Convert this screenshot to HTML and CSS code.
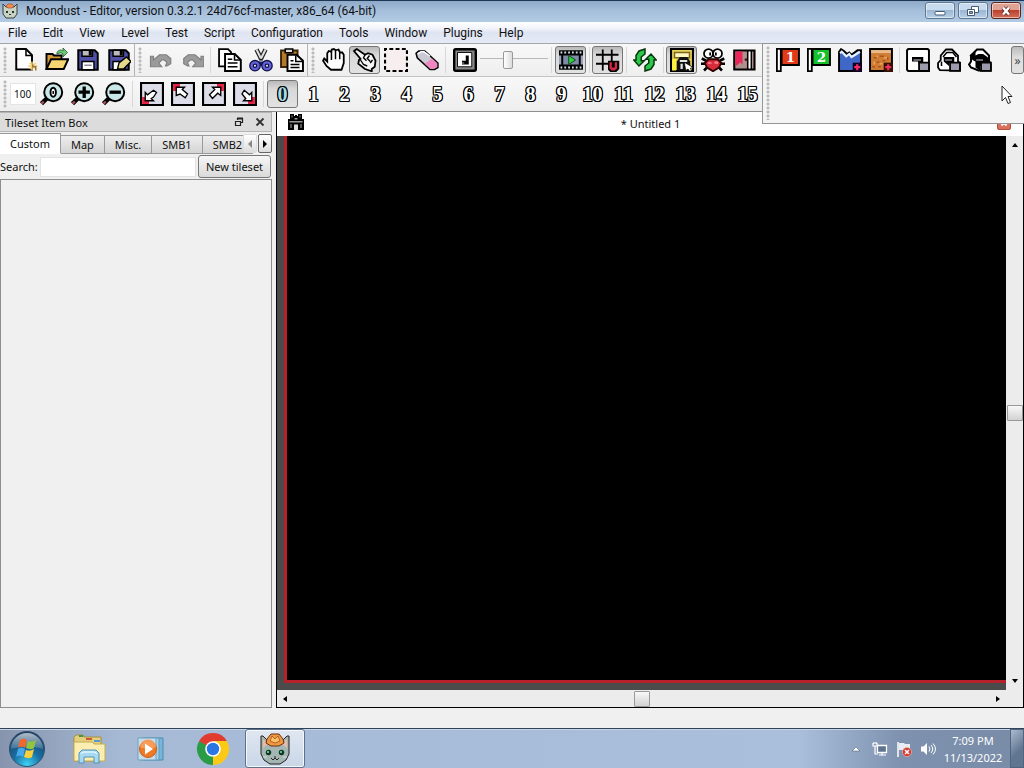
FILE: index.html
```html
<!DOCTYPE html>
<html lang="en">
<head>
  <meta charset="UTF-8" />
  <meta name="viewport" content="width=device-width, initial-scale=1" />
  <title>Moondust - Editor</title>
  <link rel="stylesheet" href="styles.css">
</head>
<body>
  <div class="window">
    <!-- Title bar -->
    <header class="titlebar">
      <svg class="app-icon" viewBox="0 0 16 16"><path d="M1 1l3 3h8l3-3v10l-3 4H4l-3-4z" fill="#c9d3c4" stroke="#3a4038"/><path d="M4 3l2-2h4l2 2-2 2H6z" fill="#f0904a" stroke="#a33" stroke-width=".6"/><path d="M4 8h2v2H4zM10 8h2v2h-2zM7 11h2v1H7z" fill="#26362c"/></svg>
      <h1>Moondust - Editor, version 0.3.2.1 24d76cf-master, x86_64 (64-bit)</h1>
      <div class="window-buttons">
        <button aria-label="Minimize"><svg viewBox="0 0 16 12"><rect x="3" y="6.500" width="10" height="3.500" rx="1" fill="#fff" stroke="#465a73"/></svg></button>
        <button aria-label="Restore"><svg viewBox="0 0 16 12"><path d="M6.500 1.500h7v6h-7z" fill="#fff" stroke="#465a73"/><path d="M2.500 4.500h7v6h-7z" fill="#fff" stroke="#465a73"/><path d="M4.500 6.500h3v2h-3z" fill="#8aa8c8" stroke="#465a73"/></svg></button>
        <button class="close" aria-label="Close"><svg viewBox="0 0 16 12"><path d="M5 2.500l6 7M11 2.500l-6 7" stroke="#5b2a2a" stroke-width="4"/><path d="M5 2.500l6 7M11 2.500l-6 7" stroke="#fff" stroke-width="2.400"/></svg></button>
      </div>
    </header>

    <nav class="menubar">
      <button>File</button><button>Edit</button><button>View</button><button>Level</button><button>Test</button><button>Script</button><button>Configuration</button><button>Tools</button><button>Window</button><button>Plugins</button><button>Help</button>
    </nav>

    <!-- Toolbars -->
    <div class="toolbars">
      <div class="toolbar-row">
        <div class="toolbar">
          <span class="grip"></span>
          <button class="tool" aria-label="New"><svg viewBox="0 0 16 16"><path d="M1.500.7h6.500l4 4v9.600H1.500z" fill="#fff" stroke="#000" stroke-width="1.300"/><path d="M8 1v4h4" fill="none" stroke="#000"/><path d="M12 9v6M9.500 12h6M10.500 10l4 4M14.500 10l-4 4" stroke="#f3cf74"/><path d="M12 11h1v1h2v3h-1v-2h-2z" fill="#9c7638"/></svg></button>
          <button class="tool" aria-label="Open"><svg viewBox="0 0 16 16"><path d="M1 14V4h4l1 1h5v3" fill="#d49d36" stroke="#000" stroke-width="1.300"/><path d="M1 14l3-6.500h11.500l-3 6.500z" fill="#f5d673" stroke="#000" stroke-width="1.300"/><path d="M8 3c1-2 3-2 4-1V0l3 3-3 3V4c-1-1-2-1-4 0z" fill="#64ce70" stroke="#244a28" stroke-width=".5"/></svg></button>
          <button class="tool" aria-label="Save"><svg viewBox="0 0 16 16"><path d="M1.500 1.500h11l2 2v11h-13z" fill="#5150a8" stroke="#000" stroke-width="1.300"/><path d="M4 1.500h7v4H4z" fill="#bbb" stroke="#000"/><path d="M8.500 2h2v3h-2z"/><path d="M4 9h8v5.500H4z" fill="#fff" stroke="#000"/><path d="M5.500 11.500h5" stroke="#8b8b95"/></svg></button>
          <button class="tool" aria-label="Save as"><svg viewBox="0 0 16 16"><path d="M1.500 1.500h11l2 2v11h-13z" fill="#5150a8" stroke="#000" stroke-width="1.300"/><path d="M4 1.500h7v4H4z" fill="#bbb" stroke="#000"/><path d="M8.500 2h2v3h-2z"/><path d="M4 9h8v5.500H4z" fill="#fff" stroke="#000"/><path d="M7 14l1-4 5-4 3 3-5 5z" fill="#e5d98a" stroke="#000" stroke-width=".9"/></svg></button>
        </div>
        <div class="toolbar">
          <span class="grip"></span>
          <button class="tool" aria-label="Undo" disabled><svg viewBox="0 0 16 16"><path d="M1 5.500h2V8l4-3.500h4.500L14.500 7v3.500L12 12h-1l1-2.500L10 8H8.500L6.500 10l2 2.500H1z" fill="#9b9b9b" stroke="#808080" stroke-width=".8"/></svg></button>
          <button class="tool" aria-label="Redo" disabled><svg viewBox="0 0 16 16"><path d="M16 5.500h-2V8l-4-3.500H5.500L2.500 7v3.500L5 12h1L5 9.500 7 8h1.500l2 2-2 2.500H16z" fill="#9b9b9b" stroke="#808080" stroke-width=".8"/></svg></button>
          <span class="sep"></span>
          <button class="tool" aria-label="Copy"><svg viewBox="0 0 16 16"><path d="M.7.700h6l2 2v9.500h-8z" fill="#fff" stroke="#000" stroke-width="1.200"/><path d="M4.700 4h6.500l4 4v7.300H4.700z" fill="#fff" stroke="#000" stroke-width="1.300"/><path d="M11 4v4h4M6.500 10h6.500M6.500 12.500h6.500M6.500 7.500h3" fill="none" stroke="#000"/></svg></button>
          <button class="tool" aria-label="Cut"><svg viewBox="0 0 16 16"><path d="M5 1l3.500 7M11 1L7.500 8" stroke="#222" stroke-width="3"/><path d="M5 1l3 6M11 1L8 7" stroke="#ddd" stroke-width="1.400"/><path d="M6 9h4v3H6z" fill="#222270"/><circle cx="4" cy="11.800" r="2.300" fill="#eee" stroke="#101048" stroke-width="3.200"/><circle cx="12" cy="11.800" r="2.300" fill="#eee" stroke="#101048" stroke-width="3.200"/><circle cx="4" cy="11.800" r="2.300" fill="none" stroke="#6262d8" stroke-width="1.500"/><circle cx="12" cy="11.800" r="2.300" fill="none" stroke="#6262d8" stroke-width="1.500"/></svg></button>
          <button class="tool" aria-label="Paste"><svg viewBox="0 0 16 16"><path d="M.7 1.700h11v11H.7z" fill="#b67a2c" stroke="#3b2508" stroke-width="1.300"/><path d="M3.500.6h5v2.600h-5z" fill="#ddd" stroke="#000"/><path d="M5 4.500h6l4.300 4v6.800H5z" fill="#fff" stroke="#000" stroke-width="1.300"/><path d="M10.500 5v4H15M7 11h6M7 13h6M7 8.500h2" fill="none" stroke="#000"/></svg></button>
        </div>
        <div class="toolbar wide">
          <span class="grip"></span>
          <button class="tool" aria-label="Hand"><svg viewBox="0 0 16 16"><path d="M3.500 9V3.500L4.500 2l1.700.5L6.500 1 8 .7 9 1.500l2-.5 1 2 1.500 0 1 1.500V10L13 14.500H6L3 12 .7 8.500 1.500 7z" fill="#fff" stroke="#000" stroke-width="1.200"/><path d="M6.300 2.500V8M9 2v5.500M11.800 3v4.500" stroke="#000"/></svg></button>
          <button class="tool checked" aria-label="Select"><svg viewBox="0 0 16 16"><path d="M.7 2L2.500.7l5.500 3.800L10 3.500l3 1 2 4-.5 4-2 1.500v1.500L8 14l-4.500-3.500L4 8l1-.8z" fill="#f5f5f5" stroke="#000" stroke-width="1.200"/><path d="M8 4.500l-1 2 2 2M11 5l-1.500 2 2 2M13 8l-1.500 2M5 8l2 3 2.500 1" fill="none" stroke="#000" stroke-width=".9"/></svg></button>
          <button class="tool" aria-label="Marquee"><svg viewBox="0 0 16 16"><path d="M.7.700h14.600v14.600H.7z" fill="#f7efef" stroke="#000" stroke-width="1.400" stroke-dasharray="2.600 1.570" stroke-dashoffset="1.300"/></svg></button>
          <button class="tool" aria-label="Eraser"><svg viewBox="0 0 16 16"><path d="M.7 3.500L2.500 2h4L15.300 10v3L13 14.300h-3L1.500 6.500z" fill="#cbc9d4" stroke="#000"/><path d="M6.500 10.500l5-3.500 3.300 3.300v2.400L12.800 13.800H10.200z" fill="#ee87bf"/><path d="M2 4l2-1.500h2l4 3" fill="none" stroke="#fff"/></svg></button>
          <span class="sep"></span>
          <button class="tool" aria-label="Item placing"><svg viewBox="0 0 16 16"><rect x=".8" y=".8" width="14.400" height="14.400" rx="1" fill="#888" stroke="#000" stroke-width="1.600"/><path d="M3 3h9.500v9.500H3z" fill="#fff" stroke="#000" stroke-width=".6"/><path d="M8.500 5h2v6H6V8.500h2.500z"/><path d="M6 9.500h1.500v1H6z" fill="#777"/></svg></button>
          <input class="zoom-slider" type="range" min="0" max="100" value="40" aria-label="Volume" />
          <span class="sep"></span>
          <button class="tool checked" aria-label="Animation"><svg viewBox="0 0 16 16"><path d="M0 1.500h16v13H0z"/><path d="M2.800 5h10.400v6H2.800z" fill="#7f8aa8"/><path d="M0 5h1.500v6H0zM14.500 5H16v6h-1.500z" fill="#98a2ba"/><path d="M1 3h14M1 13h14" stroke="#d6dfec" stroke-width="1.200" stroke-dasharray="1.200 1.350"/><path d="M6.500 5L11 8l-4.500 3z" fill="#32d246" stroke="#063d0b" stroke-width=".6"/></svg></button>
          <span class="sep narrow"></span>
          <button class="tool checked" aria-label="Snap to grid"><svg viewBox="0 0 16 16"><path d="M4.500 1v14M10.500 1v14M0 4.500h15M0 10.500h15" stroke="#000" stroke-width="1.200"/><path d="M8 8.500h7.500V14l-2 2h-4L8 14.500z"/><path d="M9 9.500h1.500v3.500h2V9.500H14v4l-1.500 1.500h-2L9 13.500z" fill="#d82745"/></svg></button>
          <span class="sep narrow"></span>
          <button class="tool" aria-label="Reload"><svg viewBox="0 0 16 16"><path d="M8 .7L4 2 2 5v3H.5L4 12l3.500-3.500H5.500V6L8 4z" fill="#2cc64b" stroke="#07370c"/><path d="M8 15.300l4-1.300 2-3V8h1.500L12 4 8.500 7.500h2V10L8 12z" fill="#2cc64b" stroke="#07370c"/></svg></button>
          <span class="sep narrow"></span>
          <button class="tool checked" aria-label="Section settings"><svg viewBox="0 0 16 16"><path d="M.7.700h14.600v14.600H.7z" fill="#ead35b" stroke="#000" stroke-width="1.400"/><path d="M1.400 8L4 5v10H1.400z" fill="#fff23d"/><path d="M3 3h10v3.500H3z" fill="#fff6c0" stroke="#7a661c"/><path d="M4.500 9l2-3h5l2 3v6h-9z" fill="#111"/><path d="M6.500 8h5v1.300h-5zM7 10.500h1.500V14H7z" fill="#e4e4e4"/><path d="M9.500 9.500l6 3.500-2 .5 1 1.500-1.500.5-1-1.500-1.500 1z" fill="#fff" stroke="#000" stroke-width=".5"/></svg></button>
          <button class="tool" aria-label="Creatures"><svg viewBox="0 0 16 16"><path d="M.5 7l3 1.500M15.500 7l-3 1.500M0 10.500h4M16 10.500h-4M2 15l3-3M14 15l-3-3" stroke="#000" stroke-width="1.700"/><circle cx="5" cy="3.700" r="3" fill="#fff" stroke="#000" stroke-width="1.200"/><circle cx="11" cy="3.700" r="3" fill="#fff" stroke="#000" stroke-width="1.200"/><path d="M5.500 3h1.200v2H5.500zM9.300 3h1.200v2H9.300z"/><path d="M2.500 10L5 7.500h6l2.500 2.500-1.500 3-4 2.500-4-2.500z" fill="#d72c3c" stroke="#300" stroke-width="1.200"/><path d="M4.500 9.500H7v1H4.500zM9 9h2.500v1.500H9z" fill="#ff828c"/></svg></button>
          <button class="tool" aria-label="Warps"><svg viewBox="0 0 16 16"><path d="M1.500 1.700h13.500v12.600H1.500z" fill="#b0908c" stroke="#000" stroke-width="1.400"/><path d="M2.200 2.400H7V11L5.500 9.500 4 11l-1.800 1z" fill="#e8265a"/><path d="M10.500 2v12M12.800 2v12" stroke="#000" stroke-width="1.100"/><path d="M11.100 2.400h1.200v11.200h-1.200z" fill="#fff"/><path d="M8.500 7H10v1.500H8.500z" fill="#401010"/></svg></button>
        </div>
      </div>

      <div class="toolbar-row second">
        <div class="toolbar wide">
          <span class="grip"></span>
          <input class="zoom-value" type="text" value="100" aria-label="Zoom percent" />
          <button class="tool" aria-label="Reset zoom"><svg viewBox="0 0 16 16"><path d="M1 14.500l3.500-3.500" stroke="#000" stroke-width="3"/><path d="M1 14.500l1.500-1.500" stroke="#a5525a" stroke-width="1.600"/><circle cx="8.800" cy="6.800" r="6" fill="#cbe8e8" stroke="#000" stroke-width="1.300"/><ellipse cx="8.800" cy="6.800" rx="1.800" ry="3" fill="#fff" stroke="#000" stroke-width="1.300"/><path d="M8.300 6h1v2h-1z"/></svg></button>
          <button class="tool" aria-label="Zoom in"><svg viewBox="0 0 16 16"><path d="M1 14.500l3.500-3.500" stroke="#000" stroke-width="3"/><path d="M1 14.500l1.500-1.500" stroke="#a5525a" stroke-width="1.600"/><circle cx="8.800" cy="6.800" r="6" fill="#cbe8e8" stroke="#000" stroke-width="1.300"/><path d="M8.800 3v7.600M5 6.800h7.600" stroke="#000" stroke-width="2.200"/></svg></button>
          <button class="tool" aria-label="Zoom out"><svg viewBox="0 0 16 16"><path d="M1 14.500l3.500-3.500" stroke="#000" stroke-width="3"/><path d="M1 14.500l1.500-1.500" stroke="#a5525a" stroke-width="1.600"/><circle cx="8.800" cy="6.800" r="6" fill="#cbe8e8" stroke="#000" stroke-width="1.300"/><path d="M5 6.800h7.600" stroke="#000" stroke-width="2.200"/></svg></button>
          <span class="sep"></span>
          <button class="tool" aria-label="Go to bottom left"><svg viewBox="0 0 16 16"><path d="M.7.700h14.600v14.600H.7z" fill="#dddde9" stroke="#000" stroke-width="1.400"/><path d="M1.400 10v4.600H6v-2H3.500V10z" fill="#e62246"/><path d="M3.500 7v5.500H9L7.500 11l1.500-1 2-3-2-1.500-2 1.500-2 1.500z" fill="#fff" stroke="#000" stroke-width=".9"/></svg></button>
          <button class="tool" aria-label="Go to top left"><svg viewBox="0 0 16 16"><path d="M.7.700h14.600v14.600H.7z" fill="#dddde9" stroke="#000" stroke-width="1.400"/><path d="M1.400 6V1.400H6v2H3.500V6z" fill="#e62246"/><path d="M3.500 9V3.500H9L7.500 5l3.500 3-1.500 2.500L6 8z" fill="#fff" stroke="#000" stroke-width=".9"/></svg></button>
          <button class="tool" aria-label="Go to top right"><svg viewBox="0 0 16 16"><path d="M.7.700h14.600v14.600H.7z" fill="#dddde9" stroke="#000" stroke-width="1.400"/><path d="M14.600 6V1.400H10v2h2.500V6z" fill="#e62246"/><path d="M12.500 9V3.500H7L8.500 5 5 8.500 7 11l3.500-3.500z" fill="#fff" stroke="#000" stroke-width=".9"/></svg></button>
          <button class="tool" aria-label="Go to bottom right"><svg viewBox="0 0 16 16"><path d="M.7.700h14.600v14.600H.7z" fill="#dddde9" stroke="#000" stroke-width="1.400"/><path d="M14.600 10v4.600H10v-2h2.500V10z" fill="#e62246"/><path d="M12.500 7v5.500H7L8.500 11 6 8l1.500-2.500 3.500 3z" fill="#fff" stroke="#000" stroke-width=".9"/></svg></button>
          <span class="sep"></span>
          <button class="tool section checked">0</button>
          <button class="tool section">1</button>
          <button class="tool section">2</button>
          <button class="tool section">3</button>
          <button class="tool section">4</button>
          <button class="tool section">5</button>
          <button class="tool section">6</button>
          <button class="tool section">7</button>
          <button class="tool section">8</button>
          <button class="tool section">9</button>
          <button class="tool section">10</button>
          <button class="tool section">11</button>
          <button class="tool section">12</button>
          <button class="tool section">13</button>
          <button class="tool section">14</button>
          <button class="tool section">15</button>
        </div>
      </div>

      <!-- Expanded part of the level toolbar -->
      <div class="toolbar-popup">
        <span class="grip"></span>
        <button class="tool" aria-label="Player 1 start"><svg viewBox="0 0 16 16"><path d="M.6.600h2.600v14.800H.6z" fill="#fff" stroke="#000" stroke-width="1.200"/><path d="M3.700.7h11.600v10.600H3.700z" fill="#e03a18" stroke="#000" stroke-width="1.300"/><text x="9.700" y="9.300" class="flag-number">1</text></svg></button>
        <button class="tool" aria-label="Player 2 start"><svg viewBox="0 0 16 16"><path d="M.6.600h2.600v14.800H.6z" fill="#fff" stroke="#000" stroke-width="1.200"/><path d="M3.700.7h11.600v10.600H3.700z" fill="#16c02d" stroke="#000" stroke-width="1.300"/><text x="9.700" y="9.300" class="flag-number">2</text></svg></button>
        <button class="tool" aria-label="Add water"><svg viewBox="0 0 16 16"><path d="M.7 2.500L2 .8 4 2l2 2 1.500-1L9 4.500 11 3l2-1.500h2.300v13.800H.7z" fill="#3f67c8" stroke="#000" stroke-width="1.300"/><path d="M1.400 3.500L2.500 2.500l3 3L7.500 4 9 6l2.500-1.500L14.600 2.500" fill="none" stroke="#e6f2ff" stroke-width="1.400"/><path d="M9.800 9.800H16V16H9.800z" fill="#102"/><path d="M12.800 10.800v4M10.800 12.800h4" stroke="#f02d62" stroke-width="1.500"/></svg></button>
        <button class="tool" aria-label="Add quicksand"><svg viewBox="0 0 16 16"><path d="M.7.700h14.600v14.600H.7z" fill="#d07c35" stroke="#000" stroke-width="1.300"/><path d="M1.400 2.400h13.200" stroke="#e7b98b" stroke-width="2"/><path d="M3 6h2v1H3zM7 5h3v1H7zM5 9h2v1H5zM9 8h2v1H9zM2 12h2v1H2zM6 12h2v1H6zM12 6h1v2h-1z" fill="#a8581a"/><path d="M5 5h1v1H5zM10 6h2v1h-2zM3 9h1v2H3zM7 10h2v1H7z" fill="#eba55f"/><path d="M9.800 9.800H16V16H9.800z" fill="#310"/><path d="M12.800 10.800v4M10.800 12.800h4" stroke="#f02d62" stroke-width="1.500"/></svg></button>
        <span class="sep narrow"></span>
        <button class="tool" aria-label="Lock blocks"><svg viewBox="0 0 16 16"><path d="M1.500.7h13l.8.8v13.800H1.500l-.8-.8v-13z" fill="#fff" stroke="#000" stroke-width="1.300"/><path d="M4 6h7.500v4H8v-1H4z"/><path d="M5 7.500h5v1H5z" fill="#8a8a94"/><path d="M8.700 9.700h6.600v5.600H8.700z" fill="#9b9bab" stroke="#000" stroke-width="1.200"/></svg></button>
        <button class="tool" aria-label="Lock background objects"><svg viewBox="0 0 16 16"><path d="M2 14.800L.7 13v-3L2.500 8V5L6 1h4l4 4v4l1.300 1v5z" fill="#fff" stroke="#000" stroke-width="1.200"/><path d="M4 6l2.500-3h4L13 6M3 12V9" fill="none" stroke="#000"/><path d="M4.500 6h7v4H8v2L4.500 9z"/><path d="M5.500 7.500h4.500v1H5.500z" fill="#8a8a94"/><path d="M8.700 9.700h6.600v5.600H8.700z" fill="#9b9bab" stroke="#000" stroke-width="1.200"/></svg></button>
        <button class="tool" aria-label="Lock characters"><svg viewBox="0 0 16 16"><path d="M2 13L.7 11l1.300-2V5l4-4h4l4 4v4l1 2v4H7z" fill="#fff" stroke="#000" stroke-width="1.300"/><path d="M1 5l4-3v3l2-1h3l3 2 2 3v3H8v3l-3-2V9L3 8z"/><path d="M5.500 7.500H10v1H5.500z" fill="#8a8a94"/><path d="M7 2.500h3V4H7z" fill="#fff"/><path d="M8.700 9.700h6.600v5.600H8.700z" fill="#9b9bab" stroke="#000" stroke-width="1.200"/></svg></button>
        <button class="extend" aria-label="More">»</button>
      </div>
    </div>

    <main class="workspace">
      <!-- Tileset dock -->
      <aside class="dock">
        <div class="dock-title">
          <h2>Tileset Item Box</h2>
          <button aria-label="Float"><svg viewBox="0 0 10 10"><path d="M3.500 3V1.500h5v4H7" fill="none" stroke="#222" stroke-width="1.200"/><path d="M3 1.500h6" stroke="#222" stroke-width="2"/><path d="M1.500 4.500h5v4h-5z" fill="none" stroke="#222" stroke-width="1.200"/></svg></button>
          <button aria-label="Close"><svg viewBox="0 0 10 10"><path d="M1.500 1.500l7 7M8.500 1.500l-7 7" stroke="#333" stroke-width="1.800"/></svg></button>
        </div>
        <div class="tabs">
          <button class="tab active">Custom</button><button class="tab">Map</button><button class="tab">Misc.</button><button class="tab">SMB1</button><button class="tab">SMB2</button>
          <div class="tab-scroll">
            <button disabled aria-label="Scroll left"><svg viewBox="0 0 6 8"><path d="M5 0v8L1 4z" fill="#888"/></svg></button><button aria-label="Scroll right"><svg viewBox="0 0 6 8"><path d="M1 0v8l4-4z"/></svg></button>
          </div>
        </div>
        <div class="search-row">
          <label for="search">Search:</label>
          <input id="search" type="text" />
          <button>New tileset</button>
        </div>
        <div class="tileset-list"></div>
      </aside>

      <!-- Level window -->
      <section class="level">
        <div class="level-title">
          <svg class="level-icon" viewBox="0 0 16 16"><path d="M2 0h4v2h1V1h2v1h1V0h4v5h2v11H0V5h2z"/><path d="M3.500 1.500h1v2h-1zM11.500 1.500h1v2h-1zM6.500 4h3v1.500h-3zM1.500 7h13v1.500h-13z" fill="#999"/><path d="M6 10.500h4V16H6z" fill="#ddd"/><path d="M2 10h2v4H2zM12 10h2v4h-2z" fill="#555"/></svg>
          <h2>* Untitled 1</h2>
          <button class="level-close" aria-label="Close level"><svg viewBox="0 0 14 14"><path d="M4 4l6 6M10 4l-6 6" stroke="#fff" stroke-width="2.400"/></svg></button>
        </div>
        <div class="level-body">
          <div class="scene"><div class="canvas"></div></div>
          <div class="scrollbar vertical">
            <svg viewBox="0 0 6 4"><path d="M0 4h6L3 0z"/></svg><span class="track"></span><span class="thumb"></span><span class="track"></span><svg viewBox="0 0 6 4"><path d="M0 0h6L3 4z"/></svg>
          </div>
        </div>
        <div class="scrollbar horizontal">
          <svg viewBox="0 0 4 6"><path d="M4 0v6L0 3z"/></svg><span class="track"></span><span class="thumb"></span><span class="track"></span><svg viewBox="0 0 4 6"><path d="M0 0v6l4-3z"/></svg>
        </div>
      </section>
    </main>

    <div class="statusbar"></div>
  </div>

  <!-- Taskbar -->
  <footer class="taskbar">
    <button class="start" aria-label="Start">
      <svg viewBox="0 0 38 38">
        <defs>
          <radialGradient id="orb" cx=".5" cy=".95" r=".9"><stop offset="0" stop-color="#3fd4f4"/><stop offset=".45" stop-color="#1870a4"/><stop offset="1" stop-color="#1c3e63"/></radialGradient>
          <linearGradient id="gloss" x2="0" y2="1"><stop offset="0" stop-color="#fff" stop-opacity=".65"/><stop offset="1" stop-color="#fff" stop-opacity=".15"/></linearGradient>
        </defs>
        <circle cx="19" cy="19" r="17.500" fill="url(#orb)" stroke="#31506d"/>
        <path d="M3 19a16 16 0 0 1 32 0c-9-3-22-3-32 0z" fill="url(#gloss)"/>
        <path d="M12 10c3-2 5-1 7 0l-2 8c-2-1-4-2-7 0z" fill="#f2672d"/>
        <path d="M20 11c3 1 5 1 8-1l-2 8c-3 2-5 1-8 0z" fill="#91c53e"/>
        <path d="M10 19c3-2 5-1 7 0l-2 8c-2-1-4-2-7 0z" fill="#45a8ea"/>
        <path d="M18 20c3 1 5 1 8-1l-2 8c-3 2-5 1-8 0z" fill="#fcd03b"/>
      </svg>
    </button>
    <button class="task" aria-label="Explorer">
      <svg viewBox="0 0 34 32"><path d="M2 4l2-2h7l1 2h17v24H2z" fill="#e5cf7a" stroke="#a88e40"/><path d="M7 2h4v2H7z" fill="#3b9b48"/><path d="M14 5h6v2h-6z" fill="#cb5a34"/><path d="M22 7h6v2h-6z" fill="#559cd2"/><path d="M2 9h18l2 2h11v17H2z" fill="#fbeeb0" stroke="#c5ac59"/><path d="M7 30V20l3-3h14l3 3v10h-5v-6H12v6z" fill="#a5daf2" stroke="#5593b5"/><path d="M9 21l2-2h12l2 2" fill="none" stroke="#fff"/></svg>
    </button>
    <button class="task" aria-label="Media Player">
      <svg viewBox="0 0 34 32"><path d="M10 5h19v22H10z" fill="#79b5d8" stroke="#4d8db3"/><path d="M7 5h18v22H7z" fill="#a6d0e7" stroke="#5c9cbf"/><path d="M4 5h18v22H4z" fill="#c5deee" stroke="#739fba"/><circle cx="14" cy="16" r="8.500" fill="#ee7a25" stroke="#cb5c14"/><path d="M6 14a8 8 0 0 1 16 0c-5 2-11 2-16 0z" fill="#ffb278" opacity=".6"/><path d="M11 10.500l8 5.500-8 5.500z" fill="#fff"/></svg>
    </button>
    <button class="task" aria-label="Chrome">
      <svg viewBox="0 0 34 32"><path d="M17 16L3.140 8A16 16 0 0 1 30.860 8z" fill="#e23c31"/><path d="M17 16L30.860 8A16 16 0 0 1 17 32z" fill="#fbc916"/><path d="M17 16V32A16 16 0 0 1 3.140 8z" fill="#2a9c48"/><path d="M17 8h13.860L24 20z" fill="#fbc916"/><path d="M3.140 8L10 20l7 4-1 8 8-12-7-4z" fill="#2a9c48"/><path d="M3.140 8H17v8z" fill="#e23c31"/><path d="M24 20l-7 12V24z" fill="#fbc916"/><circle cx="17" cy="16" r="7.800" fill="#fff"/><circle cx="17" cy="16" r="6.200" fill="#2b76e5"/></svg>
    </button>
    <button class="task active" aria-label="Moondust Editor">
      <svg viewBox="0 0 34 32"><path d="M3 3h2l6 6h12l6-6h2v18l-3 6-6 4H12l-6-4-3-6z" fill="#a3b6b2" stroke="#222"/><path d="M5 6l5 5-5 4zM29 6l-5 5 5 4z" fill="#e7bba5"/><path d="M9 6l4-5h8l4 5 1 4-5 3h-8l-5-3z" fill="#ee9942" stroke="#6d3014"/><path d="M12 8l2-5 3 3 3-3 2 5-5 2z" fill="#fac16b" stroke="#a94c17" stroke-width=".8"/><circle cx="10.500" cy="19.500" r="2.700" fill="#173324"/><circle cx="23.500" cy="19.500" r="2.700" fill="#173324"/><path d="M9 18h2v2H9zM22 18h2v2h-2z" fill="#46c88a"/><path d="M13 25l2 2 2-2 2 2 2-2M17 23v2" fill="none" stroke="#222"/><path d="M5 24h4M25 24h4" stroke="#d7e5dc"/></svg>
    </button>
    <div class="tray">
      <svg viewBox="0 0 16 16"><path d="M4 10h8L8 6z" fill="#fff" stroke="#5a6b83" stroke-width=".6"/></svg>
      <svg viewBox="0 0 16 16"><path d="M5.500 4.500h9v7h-9z" fill="#60738d" stroke="#fff" stroke-width="1.300"/><path d="M7 14h7M10 12v2M1 2v3h4V2M3 5v8h3M2 1v2M4 1v2" fill="none" stroke="#fff" stroke-width="1.200"/></svg>
      <svg viewBox="0 0 16 16"><path d="M2 1v15" stroke="#fff" stroke-width="1.500"/><path d="M3 2h5l1 1h5v7H9L8 9H3z" fill="#e8edf3"/><circle cx="11" cy="11" r="4.600" fill="#d13a31" stroke="#f1c4c0" stroke-width=".6"/><path d="M9 9l4 4M13 9l-4 4" stroke="#fff" stroke-width="1.500"/></svg>
      <svg viewBox="0 0 16 16"><path d="M1 5.500h2.500L7 2v12l-3.500-3.500H1z" fill="#fff"/><path d="M9 5.500q2 2.500 0 5M11 4q3.500 4 0 8M13 2.500q5 5.500 0 11" fill="none" stroke="#fff"/></svg>
    </div>
    <div class="clock">7:09 PM<br />11/13/2022</div>
    <button class="show-desktop" aria-label="Show desktop"></button>
  </footer>

  <svg class="pointer" viewBox="0 0 12 20"><path d="M1 1v15l3.500-3.500L7 18.500l2.500-1-2.500-6H11z" fill="#fff" stroke="#222"/></svg>
</body>
</html>
```
FILE: styles.css
```css
* {
  box-sizing: border-box;
}

body {
  margin: 0;
  height: 100vh;
  display: flex;
  flex-direction: column;
  overflow: hidden;
  background: #f0f0f0;
  color: #111;
  font-family: "Noto Sans", "Open Sans", sans-serif;
  font-size: 11px;
  position: relative;
}

h1, h2 {
  margin: 0;
  font-weight: 400;
}

button, input {
  font: inherit;
  color: inherit;
  margin: 0;
  padding: 0;
}

button {
  background: none;
  border: none;
}

svg {
  display: block;
}

.window {
  flex: 1;
  min-height: 0;
  display: flex;
  flex-direction: column;
}

/* Title bar */
.titlebar {
  height: 22px;
  display: flex;
  align-items: center;
  gap: 8px;
  padding: 0 3px 2px 2px;
  border-top: 1px solid #1d3654;
  background: linear-gradient(180deg, #8faac8, #a6c0dc 50%, #b1cbe4);
}
.app-icon {
  width: 16px;
  height: 16px;
}
.titlebar h1 {
  flex: 1;
  font-family: Roboto, sans-serif;
  font-size: 12px;
  line-height: 18px;
  white-space: nowrap;
}
.window-buttons {
  display: flex;
  gap: 3px;
}
.window-buttons button {
  width: 30px;
  height: 17px;
  display: flex;
  align-items: center;
  justify-content: center;
  border: 1px solid #60788f;
  border-radius: 3px;
  box-shadow: inset 0 0 0 1px #ffffff80;
  background: linear-gradient(180deg, #c8dbee 45%, #9bb7d2 50%, #b6d0e6);
}
.window-buttons svg {
  width: 16px;
  height: 12px;
}
.window-buttons .close {
  border-color: #5c2520;
  background: linear-gradient(180deg, #e0a293 45%, #b9412d 50%, #d2705a);
}

/* Menu bar */
.menubar {
  height: 21px;
  display: flex;
  background: linear-gradient(180deg, #fff, #f2f4fa 30%, #dfe4f2 50%, #e6eaf6);
}
.menubar button {
  padding: 0 8px;
  font-family: Roboto, sans-serif;
  font-size: 12px;
  line-height: 20px;
}

/* Toolbars */
.toolbars {
  position: relative;
  border-top: 1px solid #a5a5a5;
  border-bottom: 1px solid #8e8e8e;
}
.toolbar-row {
  display: flex;
  height: 33px;
  border-bottom: 1px solid #c4c4c4;
  background: linear-gradient(180deg, #f8f8f8, #eeeeee);
}
.toolbar-row.second {
  height: 34px;
  border-bottom: none;
}
.toolbar {
  display: flex;
  align-items: center;
  border-right: 1px solid #b4b4b4;
}
.toolbar.wide {
  border-right: none;
}
.grip {
  width: 10px;
  align-self: stretch;
  margin: 3px 0;
  background: radial-gradient(circle at 5px 2px, #bbb 1px, transparent 2px) 0 0 / 10px 4px;
}
.sep {
  width: 7px;
  height: 26px;
  background: linear-gradient(#d8d8d8, #d8d8d8) center / 1px 100% no-repeat;
}
.sep.narrow {
  width: 6px;
}
.tool {
  width: 31px;
  height: 28px;
  flex: none;
  display: flex;
  align-items: center;
  justify-content: center;
  border-radius: 3px;
}
.tool svg {
  width: 24px;
  height: 24px;
}
.tool.checked {
  border: 1px solid #777;
  background: linear-gradient(180deg, #b9b9b9, #d8d8d8 30%, #e2e2e2);
}
.section {
  font-family: "Liberation Serif", serif;
  font-weight: 700;
  font-size: 20px;
  line-height: 28px;
  color: #fff;
  text-shadow: -1px -1px #000, 0 -1px #000, 1px -1px #000, -1px 0 #000, 1px 0 #000, -1px 1px #000, 0 1px #000, 1px 1px #000;
}
.section.checked {
  color: #a5dbe6;
}
.zoom-value {
  width: 26px;
  height: 22px;
  padding-left: 3px;
  border: 1px solid #e4e4e4;
  background: #fff;
  font-size: 10px;
}
.zoom-slider {
  appearance: none;
  width: 68px;
  height: 20px;
  background: linear-gradient(#b8b8b8, #b8b8b8) center 8px / 100% 1px no-repeat;
}
.zoom-slider::-webkit-slider-thumb {
  appearance: none;
  width: 10px;
  height: 18px;
  border: 1px solid #999;
  border-radius: 2px;
  background: linear-gradient(90deg, #fff, #dcdcdc);
}
.toolbar-popup {
  position: absolute;
  top: -1px;
  right: 0;
  z-index: 5;
  width: 262px;
  height: 81px;
  display: flex;
  align-items: flex-start;
  padding-top: 2px;
  border: 1px solid #969696;
  border-right: none;
  background: #f4f4f4;
}
.toolbar-popup .grip {
  margin: 0 0 3px;
  width: 9px;
}
.toolbar-popup .sep {
  margin-top: 1px;
}
.flag-number {
  font: 700 9px "DejaVu Serif", serif;
  text-anchor: middle;
  fill: #fff;
}
.extend {
  width: 13px;
  height: 28px;
  margin-left: auto;
  border: 1px solid #777;
  border-radius: 3px;
  background: linear-gradient(180deg, #bbb, #ddd 40%, #e2e2e2);
  color: #444;
  font-size: 12px;
}

/* Workspace */
.workspace {
  flex: 1;
  min-height: 0;
  display: flex;
  gap: 4px;
}
.dock {
  width: 272px;
  display: flex;
  flex-direction: column;
}
.dock-title {
  height: 20px;
  display: flex;
  align-items: center;
  gap: 11px;
  padding: 0 6px 0 5px;
  border: 1px solid #b4b4b4;
  border-left: none;
  background: #dcdcdc;
}
.dock-title h2 {
  flex: 1;
  font-size: 11px;
}
.dock-title svg {
  width: 10px;
  height: 10px;
}
.tabs {
  position: relative;
  height: 22px;
  display: flex;
  align-items: flex-end;
  padding-top: 1px;
  overflow: hidden;
}
.tab {
  height: 19px;
  padding: 0 10px;
  border: 1px solid #999;
  border-left: none;
  background: linear-gradient(180deg, #ededed, #d4d4d4);
}
.tab.active {
  height: 21px;
  background: #fff;
  border-bottom-color: #fff;
}
.tab-scroll {
  position: absolute;
  right: 0;
  bottom: 1px;
  display: flex;
  gap: 1px;
}
.tab-scroll button {
  width: 14px;
  height: 19px;
  display: flex;
  align-items: center;
  justify-content: center;
  border: 1px solid #666;
  border-radius: 2px;
  background: linear-gradient(180deg, #fff, #ddd);
}
.tab-scroll button:disabled {
  border-color: #ddd;
}
.tab-scroll svg {
  width: 6px;
  height: 8px;
}
.search-row {
  height: 25px;
  display: flex;
  align-items: center;
  gap: 2px;
  padding-right: 1px;
}
.search-row label {
  width: 38px;
}
.search-row input {
  flex: 1;
  min-width: 0;
  height: 20px;
  border: 1px solid #e2e2e2;
  background: #fff;
}
.search-row button {
  width: 73px;
  height: 23px;
  border: 1px solid #777;
  border-radius: 3px;
  background: linear-gradient(180deg, #f6f6f6, #dadada);
}
.tileset-list {
  flex: 1;
  border: 1px solid #8e8e8e;
  background: #f0f0f0;
}

/* Level window */
.level {
  flex: 1;
  min-width: 0;
  display: flex;
  flex-direction: column;
  border: 1px solid #000;
  border-top: none;
}
.level-title {
  height: 24px;
  display: flex;
  align-items: center;
  padding: 0 12px 2px 11px;
  background: #fff;
}
.level-title h2 {
  flex: 1;
  text-align: center;
  font-size: 11px;
}
.level-icon {
  width: 16px;
  height: 16px;
  margin-bottom: 2px;
}
.level-close {
  width: 14px;
  height: 14px;
  border: 1px solid #b0503c;
  border-radius: 2px;
  background: #d9705c;
}
.level-body {
  flex: 1;
  min-height: 0;
  display: flex;
}
.scene {
  flex: 1;
  display: flex;
  padding: 0 0 7px 7px;
  background: #4b4b4b;
}
.canvas {
  flex: 1;
  background: #000;
  border-left: 3px solid #b5202a;
  border-bottom: 3px solid #b5202a;
}
.scrollbar {
  display: flex;
  align-items: center;
  background: #ececec;
}
.scrollbar.vertical {
  width: 17px;
  flex-direction: column;
  padding: 7px 0;
}
.scrollbar.horizontal {
  height: 17px;
  padding: 0 23px 0 6px;
}
.vertical svg {
  width: 6px;
  height: 4px;
}
.horizontal svg {
  width: 4px;
  height: 6px;
}
.track {
  flex: 1;
}
.thumb {
  width: 16px;
  height: 16px;
  border: 1px solid #999;
  border-radius: 1px;
  background: linear-gradient(180deg, #f8f8f8, #d2d2d2);
}

.statusbar {
  height: 20px;
}

/* Taskbar */
.taskbar {
  height: 40px;
  display: flex;
  align-items: center;
  gap: 2px;
  border-top: 1px solid #2f435c;
  box-shadow: inset 0 1px #c7d5e5;
  background: linear-gradient(90deg, #8794ad, #a6bad6 12%, #a9bfdc 78%, #7e92af 88%, #788ba7);
}
.start {
  width: 57px;
}
.start svg {
  width: 38px;
  height: 38px;
  margin-left: 8px;
}
.task {
  width: 60px;
  height: 39px;
  display: flex;
  align-items: center;
  justify-content: center;
}
.task svg {
  width: 34px;
  height: 32px;
}
.task.active {
  border: 1px solid #5d718c;
  border-radius: 3px;
  box-shadow: inset 0 0 0 1px #f4f8fc;
  background: linear-gradient(180deg, #e0e7f1, #c9d6e7);
}
.tray {
  margin-left: auto;
  display: flex;
  align-items: center;
  gap: 8px;
}
.tray svg {
  width: 16px;
  height: 16px;
}
.clock {
  width: 70px;
  text-align: center;
  color: #fff;
  font-size: 11px;
  line-height: 17px;
}
.show-desktop {
  width: 14px;
  height: 39px;
  border: 1px solid #50647e;
  background: linear-gradient(135deg, #aabbd0, #60758f 60%);
}

.pointer {
  position: absolute;
  left: 1001px;
  top: 85px;
  z-index: 10;
  width: 12px;
  height: 20px;
}
```
